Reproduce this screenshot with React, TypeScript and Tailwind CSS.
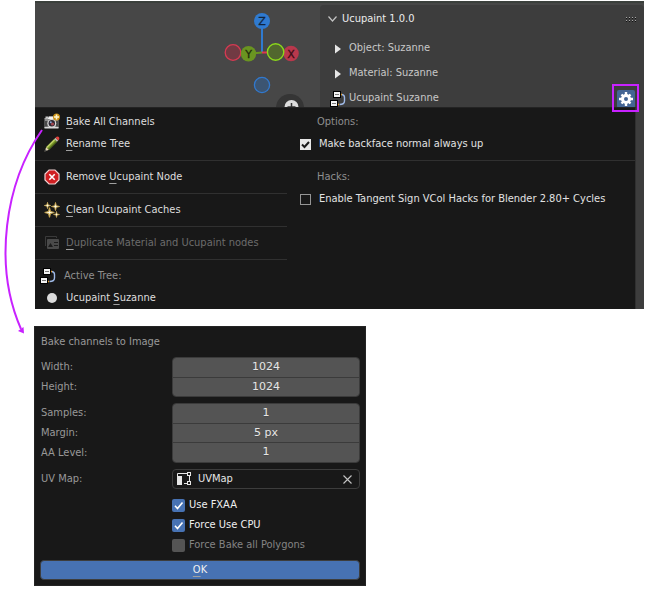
import React, { useState } from "react";
import type { ReactNode } from "react";

function Mnemonic({ children }: { children: ReactNode }) {
  return <span className="underline decoration-[#a0a0a0] decoration-1 underline-offset-3">{children}</span>;
}

function CameraIcon() {
  return (
    <svg width="18" height="18" viewBox="0 0 18 18" aria-hidden="true">
      <rect x="2.500" y="3.500" width="3" height="2" fill="#c8c8c8" />
      <path d="M1.500 5.500H5l1-2h6l1 2h2.500V15h-14z" fill="#8c8c8c" />
      <path d="M1.500 5.500H5l1-2h6v2.500H1.500z" fill="#f2f2f2" />
      <path d="M2 8h2.500v5.500H2zM13 8h2v5.500h-2z" fill="#4a4a4a" />
      <path d="M1.500 14h14v1.500h-14z" fill="#d9d9d9" />
      <circle cx="8.800" cy="10.300" r="4.400" fill="#d8d8d8" />
      <circle cx="8.800" cy="10.300" r="3.200" fill="#2c2631" />
      <circle cx="9.500" cy="11" r="1.600" fill="#a3474f" />
      <circle cx="7.800" cy="9.300" r="1" fill="#8da5d0" />
      <circle cx="13.500" cy="4" r="3.500" fill="#c98f12" />
      <path d="M13.500 1.500v5M11 4h5" stroke="#fff6cf" strokeWidth="1.600" />
    </svg>
  );
}

function PencilIcon() {
  return (
    <svg width="18" height="18" viewBox="0 0 18 18" aria-hidden="true">
      <path d="M1.500 16.500L3.300 12l2.700 2.700z" fill="#e6d9b4" />
      <path d="M1.500 16.500l.8-2.400 1.600 1.600z" fill="#555" />
      <path d="M3.300 12L11.300 4l2.700 2.700-8 8z" fill="#7d9a2b" />
      <path d="M3.300 12L11.300 4l1 1-8 8z" fill="#bfd065" />
      <path d="M5.200 13.900L13.200 5.900l.8.800-8 8z" fill="#4c651a" />
      <path d="M11.300 4l1.200-1.200 2.700 2.700L14 6.700z" fill="#b9bcb4" />
      <path d="M12.500 2.800L13.600 1.700q1.600-.4 2.400.5.700 1 .1 2.200l-1 1.100z" fill="#e3423d" />
    </svg>
  );
}

function RemoveIcon() {
  return (
    <svg width="18" height="18" viewBox="0 0 18 18" aria-hidden="true">
      <path d="M6 2h6l4 4v6l-4 4H6l-4-4V6z" fill="#cf1f22" stroke="#f1d3d3" strokeWidth="1.200" />
      <path d="M6.300 6.300l5.400 5.400M11.700 6.300l-5.400 5.400" stroke="#fff" strokeWidth="1.600" />
    </svg>
  );
}

function SparklesIcon() {
  const star = "M0-4L.8-.8 4 0 .8.8 0 4-.8.8-4 0-.8-.8z";
  return (
    <svg width="18" height="18" viewBox="0 0 18 18" aria-hidden="true">
      <g fill="#fffbe8" stroke="#c9a850" strokeWidth=".9">
        <path d={star} transform="translate(4.500 4.500) scale(.8)" />
        <path d={star} transform="translate(12.500 5.500)" />
        <path d={star} transform="translate(6.500 11.500) scale(1.200)" />
        <path d={star} transform="translate(13.500 13.500) scale(.75)" />
      </g>
    </svg>
  );
}

function DuplicateIcon() {
  return (
    <svg width="18" height="18" viewBox="0 0 18 18" aria-hidden="true">
      <path d="M2.500 12V2.500h11V4" fill="none" stroke="#3a3a3a" />
      <rect x="4" y="5" width="12" height="10" rx="1" fill="#4a4a4a" />
      <path d="M5 13l2.500-4 2.500 4zM11 8h4v1h-4zM11 11h4v1h-4z" fill="#1c1c1c" />
    </svg>
  );
}

function NodeTreeIcon() {
  return (
    <svg width="16" height="16" viewBox="0 0 16 16" aria-hidden="true">
      <path d="M10 3.500h2M7 13.500h2" stroke="#e89a1d" strokeWidth="1.600" />
      <path d="M12 3.500q2.500.5 2.500 3v3.500q0 3.500-5 3.500" fill="none" stroke="#9fb9e6" strokeWidth="1.400" />
      <rect x="3.500" y=".5" width="7" height="6" fill="#f4f4f4" stroke="#000" />
      <rect x=".5" y="9.500" width="7" height="6" fill="#f4f4f4" stroke="#000" />
      <path d="M5 3.500h4M2 12.500h4" stroke="#777" />
    </svg>
  );
}

function DotIcon() {
  return (
    <svg width="18" height="18" viewBox="0 0 18 18" aria-hidden="true">
      <circle cx="9" cy="9" r="5" fill="#dcdcdc" />
    </svg>
  );
}

function GearIcon() {
  return (
    <svg width="14" height="14" viewBox="0 0 14 14" aria-hidden="true">
      <g stroke="#fff" strokeWidth="2.400">
        <path d="M7 0v14M0 7h14M2.500 2.500l9 9M11.500 2.500l-9 9" />
      </g>
      <circle cx="7" cy="7" r="5" fill="#fff" />
      <circle cx="7" cy="7" r="2" fill="#446594" />
    </svg>
  );
}

function UvIcon() {
  return (
    <svg width="16" height="16" viewBox="0 0 16 16" aria-hidden="true">
      <path d="M1.500 5V2.500H12M13.500 4v7M12 12.500H8" fill="none" stroke="#e6e6e6" />
      <rect x="1" y="5" width="5" height="9" fill="#e6e6e6" />
      <rect x="11.500" y="1.500" width="3" height="3" fill="#181818" stroke="#e6e6e6" />
      <rect x="11.500" y="10.500" width="3" height="3" fill="#181818" stroke="#e6e6e6" />
    </svg>
  );
}

function Gizmo() {
  return (
    <svg width="100" height="104" viewBox="220 3 100 104" role="img" aria-label="Viewport axes">
      <circle cx="290" cy="108" r="14" fill="#353535" />
      <circle cx="291.500" cy="107" r="7" fill="#dedede" />
      <path d="M291.500 103v8M287.500 107h8" stroke="#353535" strokeWidth="1.500" />
      <path d="M262 21v32" stroke="#2f7ad0" strokeWidth="2" />
      <path d="M250 53.500l12-1" stroke="#6a9421" strokeWidth="2" />
      <path d="M262 52.500h10" stroke="#e0344f" strokeWidth="2" />
      <circle cx="233" cy="52.500" r="7.800" fill="#713a43" stroke="#d73a52" strokeWidth="1.300" />
      <circle cx="248.500" cy="53.700" r="7.700" fill="#6a9421" />
      <circle cx="291" cy="53.500" r="7.800" fill="#b9384c" />
      <circle cx="275.600" cy="52" r="8.200" fill="#51672e" stroke="#8bd81b" strokeWidth="1.400" />
      <circle cx="262" cy="21" r="8" fill="#2f7ad0" />
      <circle cx="262" cy="85" r="7.600" fill="#3c5572" stroke="#3179cf" strokeWidth="1.300" />
      <g fontFamily="DejaVu Sans, sans-serif" fontSize="11" textAnchor="middle" stroke="currentColor" strokeWidth=".3">
        <text x="262" y="25" fill="#10243c" className="text-[#10243c]">Z</text>
        <text x="248.500" y="58" fill="#1f2c0b" className="text-[#1f2c0b]">Y</text>
        <text x="291" y="57.500" fill="#3a0d15" className="text-[#3a0d15]">X</text>
      </g>
    </svg>
  );
}

function MenuItem({ icon, children, disabled = false }: { icon: ReactNode; children: ReactNode; disabled?: boolean }) {
  return (
    <button
      type="button"
      disabled={disabled}
      className="flex h-[22px] w-full items-center gap-[5px] pl-2 text-left text-[#dedede] disabled:text-[#6c6c6c]"
    >
      {icon}
      <span>{children}</span>
    </button>
  );
}

function Divider() {
  return (
    <div role="separator" className="py-[5px]">
      <div className="h-px bg-[#303030]" />
    </div>
  );
}

function MenuCheck({ label, initial }: { label: string; initial: boolean }) {
  const [on, setOn] = useState(initial);
  return (
    <label className="flex h-[22px] items-center gap-2 pl-[13px] text-[#e2e2e2]">
      <span className="grid size-[11px] shrink-0">
        <input
          type="checkbox"
          checked={on}
          onChange={() => setOn(!on)}
          className="peer size-[11px] appearance-none border border-[#959595] [grid-area:1/1] checked:border-[#e6e6e6] checked:bg-[#e6e6e6]"
        />
        <svg viewBox="0 0 11 11" className="pointer-events-none invisible size-[11px] [grid-area:1/1] peer-checked:visible" aria-hidden="true">
          <path d="M2 5.500l2.500 2.500L9 3" fill="none" stroke="#181818" strokeWidth="2" />
        </svg>
      </span>
      {label}
    </label>
  );
}

function DialogCheck({ label, initial, disabled = false }: { label: string; initial: boolean; disabled?: boolean }) {
  const [on, setOn] = useState(initial);
  return (
    <label className={disabled ? "flex h-5 items-center gap-1 text-[#848484]" : "flex h-5 items-center gap-1 text-[#f0f0f0]"}>
      <span className="grid size-[13px] shrink-0">
        <input
          type="checkbox"
          checked={on}
          disabled={disabled}
          onChange={() => setOn(!on)}
          className="peer size-[13px] appearance-none rounded-xs bg-[#545454] [grid-area:1/1] checked:bg-[#4772b3]"
        />
        <svg viewBox="0 0 13 13" className="pointer-events-none invisible size-[13px] [grid-area:1/1] peer-checked:visible" aria-hidden="true">
          <path d="M3 6.800l2.500 2.700L10.500 3.500" fill="none" stroke="#fff" strokeWidth="1.600" />
        </svg>
      </span>
      <span className="leading-[22px]">{label}</span>
    </label>
  );
}

function FieldGroup({ fields }: { fields: { id: string; label: string; value: string }[] }) {
  return (
    <div className="flex">
      <div className="flex w-[132px] shrink-0 flex-col pl-px">
        {fields.map((f) => (
          <label key={f.id} htmlFor={f.id} className="h-5 leading-5">
            {f.label}
          </label>
        ))}
      </div>
      <div className="flex flex-1 flex-col divide-y divide-[#3b3b3b] overflow-hidden rounded-sm border border-[#3b3b3b]">
        {fields.map((f) => (
          <input
            key={f.id}
            id={f.id}
            defaultValue={f.value}
            className="min-h-0 w-full flex-1 bg-[#545454] text-center font-['DejaVu_Sans',sans-serif] text-[#e6e6e6] text-shadow-2xs"
          />
        ))}
      </div>
    </div>
  );
}

function TreeRow({ label }: { label: string }) {
  return (
    <button type="button" className="flex h-[25px] shrink-0 items-center gap-2 pl-[15px] text-[#c8c8c8]">
      <svg width="6" height="10" viewBox="0 0 6 10" aria-hidden="true">
        <path d="M0 0.500L6 5 0 9.500z" fill="#e6e6e6" />
      </svg>
      {label}
    </button>
  );
}

function UcupaintPanel() {
  return (
    <section className="mt-[2px] flex w-[324px] flex-col rounded-t-sm bg-[#3d3d3d]">
      <header className="flex h-7 shrink-0 items-center justify-between pr-[7px] pl-2 text-[#ececec]">
        <button type="button" className="flex items-center gap-[5px]">
          <svg width="9" height="6" viewBox="0 0 9 6" aria-hidden="true">
            <path d="M.5.500l4 4.500 4-4.500" fill="none" stroke="#c4c4c4" strokeWidth="1.200" />
          </svg>
          Ucupaint 1.0.0
        </button>
        <svg width="11" height="5" viewBox="0 0 11 5" aria-hidden="true">
          <path d="M0 .5h11M0 3.500h11" stroke="#a8a8a8" strokeDasharray="1 2" />
          <path d="M0 1.500h11M0 4.500h11" stroke="#111" strokeDasharray="1 2" />
        </svg>
      </header>
      <div className="flex shrink-0 flex-col pt-[3px]">
        <TreeRow label="Object: Suzanne" />
        <TreeRow label="Material: Suzanne" />
        <div className="flex h-[25px] items-center justify-between pr-[9px] pl-[10px] text-[#c8c8c8]">
          <span className="flex items-center gap-[3px]">
            <NodeTreeIcon />
            Ucupaint Suzanne
          </span>
          <button type="button" aria-label="Ucupaint settings" className="flex size-[18px] items-center justify-center rounded-xs bg-[#446594]">
            <GearIcon />
          </button>
        </div>
      </div>
    </section>
  );
}

function UcupaintMenu() {
  return (
    <div className="flex bg-[#3d3d3d] pr-2">
      <nav className="flex flex-1 border-t border-r border-t-[#232323] border-r-[#303030] bg-[#181818] pt-[3px]">
        <div className="flex w-[252px] shrink-0 flex-col">
          <MenuItem icon={<CameraIcon />}><Mnemonic>B</Mnemonic>ake All Channels</MenuItem>
          <MenuItem icon={<PencilIcon />}><Mnemonic>R</Mnemonic>ename Tree</MenuItem>
          <Divider />
          <MenuItem icon={<RemoveIcon />}>Remove <Mnemonic>U</Mnemonic>cupaint Node</MenuItem>
          <Divider />
          <MenuItem icon={<SparklesIcon />}><Mnemonic>C</Mnemonic>lean Ucupaint Caches</MenuItem>
          <Divider />
          <MenuItem icon={<DuplicateIcon />} disabled><Mnemonic>D</Mnemonic>uplicate Material and Ucupaint nodes</MenuItem>
          <Divider />
          <div className="flex h-[22px] items-center gap-2 pl-[5px] text-[#8f8f8f]">
            <NodeTreeIcon />
            Active Tree:
          </div>
          <MenuItem icon={<DotIcon />}>Ucupaint <Mnemonic>S</Mnemonic>uzanne</MenuItem>
        </div>
        <div className="flex flex-1 flex-col">
          <h2 className="h-[22px] pl-[30px] leading-[22px] text-[#8f8f8f]">Options:</h2>
          <MenuCheck label="Make backface normal always up" initial={true} />
          <Divider />
          <h2 className="h-[22px] pl-[30px] leading-[22px] text-[#8f8f8f]">Hacks:</h2>
          <MenuCheck label="Enable Tangent Sign VCol Hacks for Blender 2.80+ Cycles" initial={false} />
        </div>
      </nav>
    </div>
  );
}

function BakeDialog() {
  return (
    <form
      onSubmit={(e) => e.preventDefault()}
      className="mt-[17px] ml-[34px] flex w-[332px] flex-col gap-[6px] border border-[#242424] bg-[#181818] p-[5px] text-[#989898]"
    >
      <h2 className="-mb-px h-5 pl-px leading-5">Bake channels to Image</h2>
      <FieldGroup
        fields={[
          { id: "width", label: "Width:", value: "1024" },
          { id: "height", label: "Height:", value: "1024" },
        ]}
      />
      <FieldGroup
        fields={[
          { id: "samples", label: "Samples:", value: "1" },
          { id: "margin", label: "Margin:", value: "5 px" },
          { id: "aa", label: "AA Level:", value: "1" },
        ]}
      />
      <div className="flex">
        <label htmlFor="uv" className="h-5 w-[132px] shrink-0 pl-px leading-5">UV Map:</label>
        <div className="flex h-5 flex-1 items-center gap-[6px] rounded-sm border border-[#3d3d3d] pr-[7px] pl-[3px]">
          <UvIcon />
          <input id="uv" defaultValue="UVMap" className="min-w-0 flex-1 bg-transparent text-[#e6e6e6]" />
          <button type="button" aria-label="Clear UV map" className="flex">
            <svg width="9" height="9" viewBox="0 0 9 9" aria-hidden="true">
              <path d="M.5.500l8 8M8.500.500l-8 8" stroke="#c4c4c4" strokeWidth="1.100" />
            </svg>
          </button>
        </div>
      </div>
      <div className="-mb-px ml-[132px] flex flex-col">
        <DialogCheck label="Use FXAA" initial={true} />
        <DialogCheck label="Force Use CPU" initial={true} />
        <DialogCheck label="Force Bake all Polygons" initial={false} disabled />
      </div>
      <button type="submit" className="h-5 rounded-sm border border-[#3d3d3d] bg-[#4772b3] leading-[18px] text-[#f0f0f0]">
        <Mnemonic>O</Mnemonic>K
      </button>
    </form>
  );
}

export default function App() {
  return (
    <main className="relative bg-white pt-px font-['DejaVu_Sans_Condensed','DejaVu_Sans',sans-serif] text-[11px]">
      <div className="relative mr-[6px] ml-[35px]">
        <div className="flex h-[106px] overflow-hidden border-t-2 border-[#3b403c] bg-[#474747]">
          <div className="flex flex-1 justify-end">
            <Gizmo />
          </div>
          <UcupaintPanel />
        </div>
        <UcupaintMenu />
        <div className="pointer-events-none absolute top-[83px] right-[5px] h-7 w-[27px] border-2 border-[#c822ff]" />
      </div>
      <BakeDialog />
      <svg className="pointer-events-none absolute top-0 left-0" width="60" height="340" viewBox="0 0 60 340" aria-hidden="true">
        <path d="M42 130C5 183-7 265 21 329" fill="none" stroke="#c822ff" strokeWidth="2" />
        <path d="M24 333.500l-6-2.500 5.500-4z" fill="#c822ff" />
      </svg>
    </main>
  );
}
